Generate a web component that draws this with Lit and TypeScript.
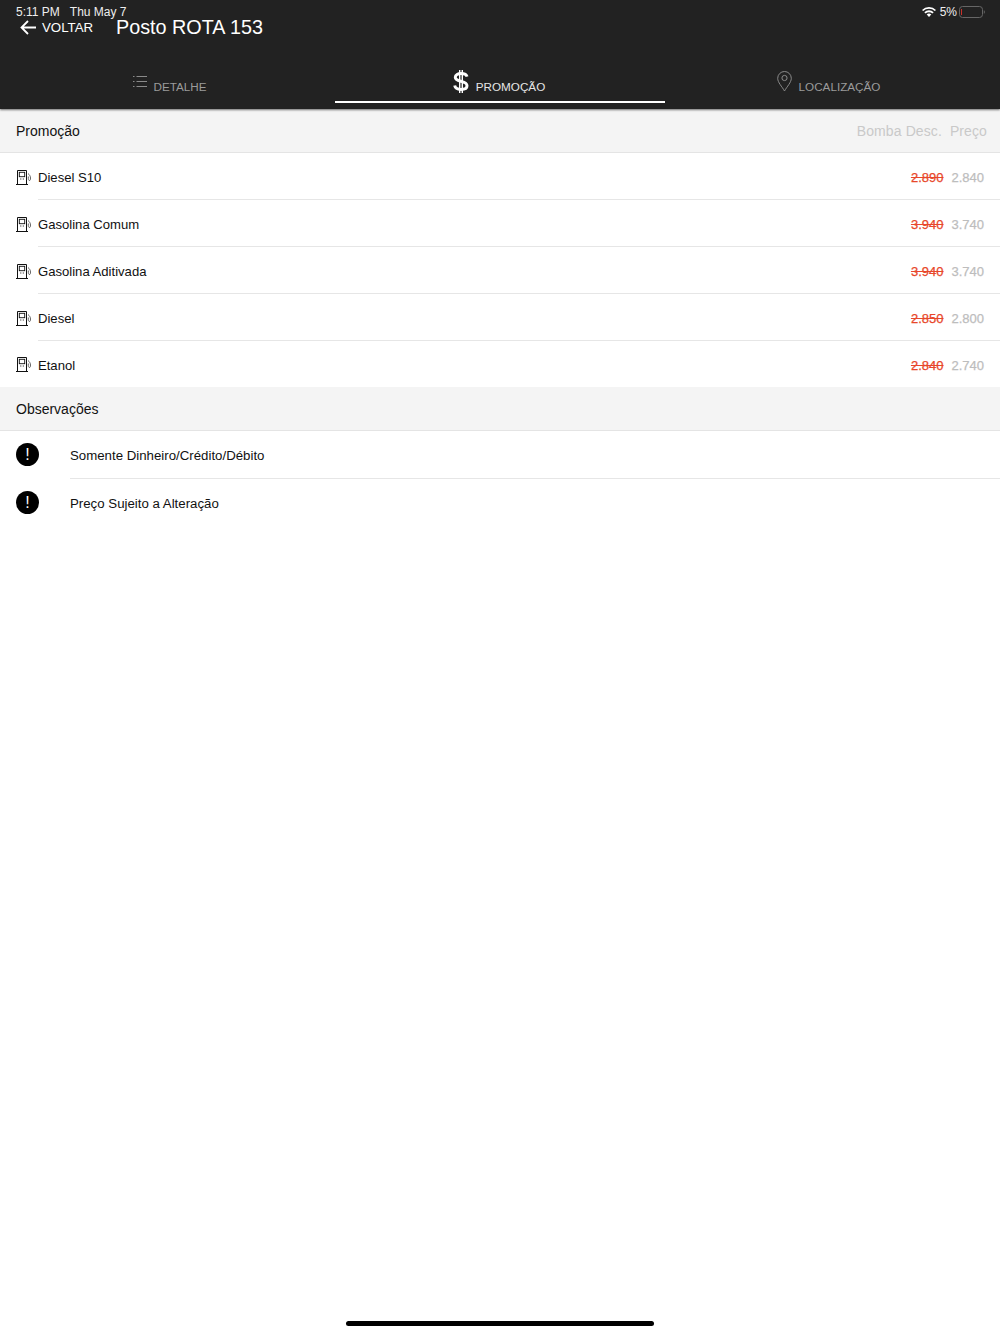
import { LitElement, html, css, svg } from "lit";
import { customElement } from "lit/decorators.js";

const pump = svg`<svg class="pump" width="15" height="15" viewBox="0 0 15 15" fill="none" stroke="#111" stroke-width="1">
  <path d="M1.500 14.500V.5H10.500V14.500M0 14.500H12"/>
  <rect x="3.300" y="2.300" width="5.400" height="4.400" stroke-width=".9"/>
  <path d="M4.300 9h1M6.800 9h1" stroke-width="1"/>
  <path d="M12 3.500c1.700 1.400 2.500 2.800 2.500 4.500c0 1.500-.3 2.500-1 2.500c-.8 0-1.200-.8-1.200-1.800V6.500" stroke="#555" stroke-width=".9"/>
</svg>`;

const fuels = [
  ["Diesel S10", "2.890", "2.840"],
  ["Gasolina Comum", "3.940", "3.740"],
  ["Gasolina Aditivada", "3.940", "3.740"],
  ["Diesel", "2.850", "2.800"],
  ["Etanol", "2.840", "2.740"],
];
const notes = ["Somente Dinheiro/Crédito/Débito", "Preço Sujeito a Alteração"];

@customElement("app-root")
export class AppRoot extends LitElement {
  static styles = css`
    :host { display: flex; flex-direction: column; height: 1334px; background: #fff; color: #111;
      font-family: "Liberation Sans", Arial, sans-serif; overflow: hidden; }
    .header { height: 109px; flex: none; background: #222; color: #fff; display: flex; flex-direction: column;
      box-shadow: 0 1px 2px rgba(0,0,0,.55); position: relative; }
    .status { height: 14px; padding: 5px 15px 0 16px; display: flex; justify-content: space-between; font-size: 12px; line-height: 14px; color: #eee; }
    .status .left { display: flex; gap: 10px; }
    .status .right { display: flex; align-items: center; gap: 0; }
    .status .pct { margin: 0 2px 0 4px; }
    .nav { height: 22px; margin-top: -3px; padding-left: 20px; display: flex; align-items: center; }
    .back { display: flex; align-items: center; gap: 6px; font-size: 13.300px; width: 96px; }
    .title { font-size: 19.800px; line-height: 22px; }
    .tabs { margin-top: 26px; display: flex; height: 39px; justify-content: center; }
    .tab { width: 330px; display: flex; align-items: flex-end; justify-content: center; gap: 7px; padding-bottom: 7px;
      box-sizing: border-box; font-size: 11.700px; line-height: 15px; color: #9b9b9b; border-bottom: 2px solid transparent; height: 39px; }
    .tab.active { color: #e6e6e6; border-bottom-color: #fff; padding-right: 2px; }
    .tab.loc { padding-right: 3px; }
    .tab.det { gap: 6px; }
    .tab svg { display: block; }
    .tab .list { margin-bottom: 6px; }
    .tab .dollar { margin-bottom: 1px; }
    .tab .pin { margin-bottom: 2px; }
    .section { height: 44px; flex: none; background: #f4f4f4; border-bottom: 1px solid #e4e4e4; display: flex; align-items: center;
      justify-content: space-between; padding: 0 13px 0 16px; font-size: 14px; box-sizing: border-box; }
    .section .cols { display: flex; gap: 8px; color: #c9c9c9; letter-spacing: .1px; }
    .row { height: 47px; flex: none; display: flex; align-items: center; box-sizing: border-box; }
    .row.last { height: 46px; }
    .row .ic { width: 38px; flex: none; display: flex; padding: 1px 0 0 16px; box-sizing: border-box; }
    .row .body { flex: 1; height: 100%; display: flex; align-items: center; justify-content: space-between; padding: 2px 16px 0 0;
      font-size: 13.100px; border-bottom: 1px solid #e6e6e6; box-sizing: border-box; }
    .row.last .body { border-bottom: none; }
    .prices { display: flex; gap: 8px; font-size: 13px; -webkit-text-stroke: .25px; }
    .old { color: #e8472a; text-decoration: line-through; }
    .new { color: #bdbdbd; }
    .note { height: 48px; flex: none; display: flex; align-items: center; }
    .note .ic { width: 70px; flex: none; padding-left: 16px; box-sizing: border-box; display: flex; margin-top: -1px; }
    .note .body { flex: 1; height: 100%; display: flex; align-items: center; padding-top: 1px; font-size: 13.250px; box-sizing: border-box; }
    .note.line .body { border-bottom: 1px solid #e6e6e6; }
    .alert { width: 23px; height: 23px; border-radius: 50%; background: #000; color: #fff; display: flex; align-items: center; justify-content: center;
      font-size: 16px; line-height: 1; }
    .home { margin-top: auto; margin-bottom: 8px; align-self: center; width: 308px; height: 5px; border-radius: 3px; background: #000; flex: none; }
  `;

  render() {
    return html`
      <div class="header">
        <div class="status">
          <div class="left"><span>5:11 PM</span><span>Thu May 7</span></div>
          <div class="right">
            <svg width="14" height="10" viewBox="0 0 14 10" fill="#fff">
              <path d="M7 10 4.700 7.600a3.300 3.300 0 0 1 4.600 0Z"/>
              <path d="M3.600 6.500 2.300 5.200a6.700 6.700 0 0 1 9.400 0L10.400 6.500a4.900 4.900 0 0 0-6.800 0Z"/>
              <path d="M1.200 4.100 0 2.900a9.900 9.900 0 0 1 14 0L12.800 4.100a8.200 8.200 0 0 0-11.600 0Z"/>
            </svg>
            <span class="pct">5%</span>
            <svg width="26" height="12" viewBox="0 0 26 12" fill="none">
              <rect x=".5" y=".5" width="23" height="11" rx="3" stroke="#666"/>
              <rect x="2" y="3" width="1" height="6" fill="#c9302a"/>
              <path d="M24.800 4.200c.8.300 1 1 1 1.800s-.2 1.500-1 1.800Z" fill="#666"/>
            </svg>
          </div>
        </div>
        <div class="nav">
          <div class="back">
            <svg width="16" height="15" viewBox="0 0 16 15" fill="none" stroke="#fff" stroke-width="1.800">
              <path d="M8 1 1.500 7.500 8 14M1.500 7.500H16"/>
            </svg>
            <span>VOLTAR</span>
          </div>
          <div class="title">Posto ROTA 153</div>
        </div>
        <div class="tabs">
          <div class="tab det">
            <svg class="list" width="14" height="13" viewBox="0 0 14 13" fill="none" stroke="#8a8a8a" stroke-width="1">
              <path d="M3.500 1.500H14M3.500 6.500H14M3.500 11.500H14M0 1.500H1.500M0 6.500H1.500M0 11.500H1.500"/>
            </svg>
            <span>DETALHE</span>
          </div>
          <div class="tab active">
            <svg class="dollar" width="16" height="23" viewBox="0 0 16 23" fill="none" stroke="#fff" stroke-width="3">
              <path d="M14 6.700C13.500 4.500 11 3.600 8 3.600C5 3.600 2.300 4.800 2.300 7.200C2.300 9.900 5 10.500 8 11.300C11 12.100 14 12.800 14 15.700C14 18.200 11.200 19.400 8 19.400C4.800 19.400 2.200 18.300 1.700 15.600"/>
              <path d="M6.700 0V23M9.300 0V23" stroke-width="1.400"/>
            </svg>
            <span>PROMOÇÃO</span>
          </div>
          <div class="tab loc">
            <svg class="pin" width="15" height="21" viewBox="0 0 15 21" fill="none" stroke="#8a8a8a" stroke-width="1">
              <path d="M7.500 20C5 15.500 .7 11.500 .7 7.300A6.800 6.800 0 0 1 14.300 7.300C14.300 11.500 10 15.500 7.500 20Z"/>
              <circle cx="7.500" cy="7" r="2.600"/>
            </svg>
            <span>LOCALIZAÇÃO</span>
          </div>
        </div>
      </div>

      <div class="section">
        <span>Promoção</span>
        <div class="cols"><span>Bomba Desc.</span><span>Preço</span></div>
      </div>
      ${fuels.map(([name, oldP, newP], i) => html`
        <div class="row ${i === fuels.length - 1 ? "last" : ""}">
          <div class="ic">${pump}</div>
          <div class="body">
            <span>${name}</span>
            <div class="prices"><span class="old">${oldP}</span><span class="new">${newP}</span></div>
          </div>
        </div>`)}
      <div class="section"><span>Observações</span></div>
      ${notes.map((n, i) => html`
        <div class="note ${i === 0 ? "line" : ""}">
          <div class="ic"><div class="alert">!</div></div>
          <div class="body">${n}</div>
        </div>`)}
      <div class="home"></div>
    `;
  }
}
